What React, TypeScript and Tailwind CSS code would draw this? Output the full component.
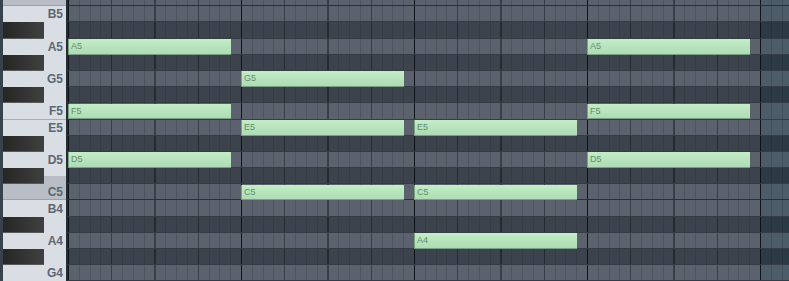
import React from 'react';

// piano roll rows, top to bottom
const ROWS = ['C6', 'B5', 'A#5', 'A5', 'G#5', 'G5', 'F#5', 'F5', 'E5', 'D#5', 'D5', 'C#5', 'C5', 'B4', 'A#4', 'A4', 'G#4', 'G4', 'F#4'];

const BAR = 173;

// note name -> bars where a note starts
const NOTES: Record<string, number[]> = {
    A5: [0, 3],
    G5: [1],
    F5: [0, 3],
    E5: [1, 2],
    D5: [0, 3],
    C5: [1, 2],
    A4: [2],
};

const isBlack = (n: string) => n.includes('#');

const PianoKey: React.FC<{ name: string; hideLabel?: boolean }> = ({ name, hideLabel }) => {
    const black = isBlack(name);
    const isC = name.startsWith('C') && !black;
    // octave / E-F boundaries get a visible seam
    const seam = isC ? 'border-b border-[#9aa1ab]' : name.startsWith('F') && !black ? 'border-b border-[#a7aeb8]' : '';

    if (black) {
        const lowerGray = name.startsWith('C#');
        return (
            <div className="flex h-[16.2px] shrink-0">
                <div className="w-[41px] border-b border-[#585858] bg-gradient-to-r from-[#262626] to-[#404040]" />
                <div className="flex flex-1 flex-col">
                    <div className="flex-1 bg-[#d9dee4]" />
                    <div className={`flex-1 ${lowerGray ? 'bg-[#b9bec6]' : 'bg-[#d9dee4]'}`} />
                </div>
            </div>
        );
    }

    return (
        <div className={`flex h-[16.2px] shrink-0 items-center justify-end pr-[3px] ${isC ? 'bg-[#b9bec6]' : 'bg-[#d9dee4]'} ${seam}`}>
            {!hideLabel && (
                <span className="font-['Liberation_Sans',sans-serif] text-[12px] font-bold leading-none text-[#5c6675]">{name}</span>
            )}
        </div>
    );
};

const GRID_LINES =
    'bg-[image:repeating-linear-gradient(90deg,rgba(10,14,20,0.85)_0_1px,transparent_1px_173px),repeating-linear-gradient(90deg,rgba(0,0,0,0.28)_0_1px,transparent_1px_43.25px),repeating-linear-gradient(90deg,rgba(0,0,0,0.13)_0_1px,transparent_1px_10.8125px)]';

const GridRow: React.FC<{ name: string }> = ({ name }) => {
    const black = isBlack(name);
    const seam = name.startsWith('C') && !black ? 'border-b border-[#2a3038]' : 'border-b border-black/10';
    return (
        <div className={`relative flex h-[16.2px] shrink-0 ${seam}`}>
            <div className={`w-[692px] ${black ? 'bg-[#3d434d]' : 'bg-[#5b626d]'} ${GRID_LINES}`} />
            <div className={`flex-1 ${black ? 'bg-[#2b3a45]' : 'bg-[#4c5c68]'} ${GRID_LINES}`} />
            {(NOTES[name] || []).map((bar) => (
                <div
                    key={bar}
                    className="absolute top-[0.5px] h-[15.5px] w-[163px] border-l border-b border-[#76a37e] bg-gradient-to-b from-[#c4ecc8] to-[#addcb3] pl-[2px] font-['Liberation_Sans',sans-serif] text-[9px] leading-[14px] text-[#628c6a]"
                    style={{ left: bar * BAR }}
                >
                    {name}
                </div>
            ))}
        </div>
    );
};

export default function App() {
    return (
        <div className="flex h-[281px] w-[789px] overflow-hidden bg-[#3d434d]">
            <div className="w-[3px] bg-[#36424c]" />
            <div className="-mt-[10px] flex w-[63px] flex-col">
                {ROWS.map((n, i) => (
                    <PianoKey key={n} name={n} hideLabel={i === 0} />
                ))}
            </div>
            <div className="w-[2px] bg-[#272c33]" />
            <div className="-mt-[10px] flex flex-1 flex-col">
                {ROWS.map((n) => (
                    <GridRow key={n} name={n} />
                ))}
            </div>
        </div>
    );
}
